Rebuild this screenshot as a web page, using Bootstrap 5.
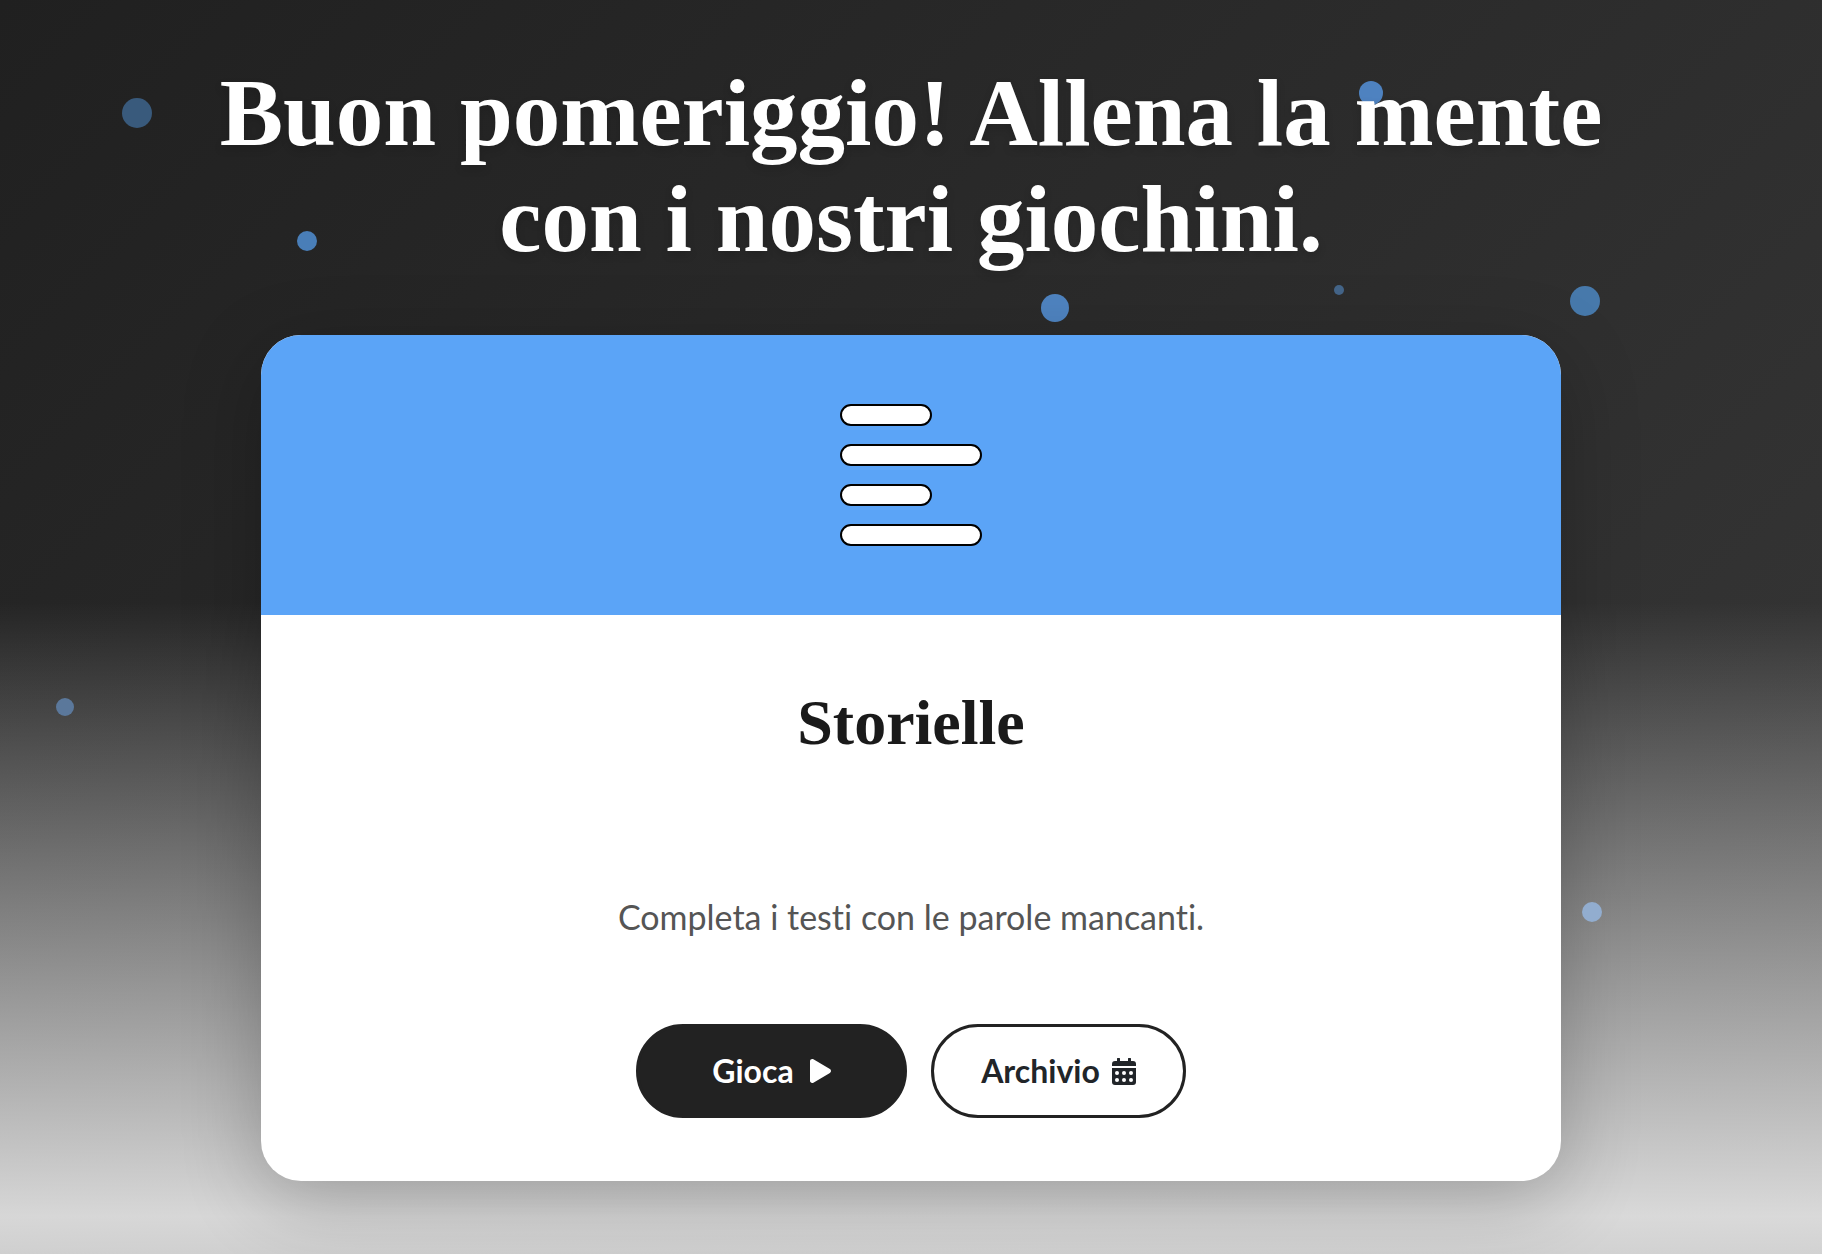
<!DOCTYPE html>
<html lang="it">
<head>
<meta charset="utf-8">
<meta name="viewport" content="width=device-width, initial-scale=1">
<title>Storielle</title>
<link rel="stylesheet" href="https://cdn.jsdelivr.net/npm/bootstrap@5.3.0/dist/css/bootstrap.min.css">
<style>
body { font-family: Lato, "Liberation Sans", sans-serif; font-variant-ligatures: none; color: #222; }
.hero {
  padding: 60px 24px 73px;
  background:
    linear-gradient(to bottom, rgba(250,250,250,0) 48%, rgba(250,250,250,.83) 97%, rgba(244,244,244,.82) 100%),
    linear-gradient(135deg, #202020, #383838);
}
.hero-title {
  max-width: 1420px;
  font: 700 95px/106px "Liberation Serif", serif;
  text-shadow: 0 4px 8px rgba(0,0,0,.15);
  margin-bottom: 63px;
}
.game { max-width: 1300px; border-radius: 40px; box-shadow: 0 20px 80px rgba(0,0,0,.24); }
.game-top { height: 280px; background: #5ba4f7; }
.game-body { padding: 72px 24px 63px; }
.game-name { font: 700 64px/72px "Liberation Serif", serif; color: #1a1a1a; margin-bottom: 136px; }
.game-text { font-size: 34px; line-height: 44px; color: #555; margin-bottom: 85px; }
.pill { height: 94px; border: 3px solid #222; font-size: 32px; font-weight: 700; line-height: 40px; }
.pill-play { width: 271px; --bs-btn-bg: #222; }
.pill-archive { width: 255px; }
.dot { position: absolute; border-radius: 50%; transform: translate(-50%, -50%); }
.dot-a { left: 7.5%; top: 9%; width: 30px; height: 30px; background: #395a7c; }
.dot-b { left: 16.85%; top: 19.2%; width: 20px; height: 20px; background: #497eb8; }
.dot-c { left: 75.25%; top: 7.4%; width: 24px; height: 24px; background: #4e82c0; }
.dot-d { left: 57.9%; top: 24.6%; width: 28px; height: 28px; background: #4f84c1; }
.dot-e { left: 73.5%; top: 23.1%; width: 10px; height: 10px; background: #446589; }
.dot-f { left: 87%; top: 24%; width: 30px; height: 30px; background: #4779ab; }
.dot-g { left: 3.55%; top: 56.35%; width: 18px; height: 18px; background: #5b789b; }
.dot-h { left: 87.4%; top: 72.75%; width: 20px; height: 20px; background: #92adcf; }
</style>
<script src="https://cdn.jsdelivr.net/npm/bootstrap@5.3.0/dist/js/bootstrap.bundle.min.js"></script>
</head>
<body>
<main class="hero position-relative overflow-hidden min-vh-100">
  <span class="dot dot-a"></span><span class="dot dot-b"></span><span class="dot dot-c"></span><span class="dot dot-d"></span>
  <span class="dot dot-e"></span><span class="dot dot-f"></span><span class="dot dot-g"></span>
  <h1 class="hero-title position-relative text-white text-center mx-auto">Buon pomeriggio! Allena la mente con i nostri giochini.</h1>
  <article class="game position-relative bg-white mx-auto overflow-hidden">
    <div class="game-top d-flex align-items-center justify-content-center">
      <svg width="142" height="142" viewBox="0 0 142 142" fill="#fff" stroke="#000" stroke-width="2" aria-hidden="true">
        <rect x="1" y="1" width="90" height="20" rx="10"/><rect x="1" y="41" width="140" height="20" rx="10"/>
        <rect x="1" y="81" width="90" height="20" rx="10"/><rect x="1" y="121" width="140" height="20" rx="10"/>
      </svg>
    </div>
    <div class="game-body text-center">
      <h2 class="game-name">Storielle</h2>
      <p class="game-text">Completa i testi con le parole mancanti.</p>
      <div class="d-flex flex-wrap justify-content-center gap-4">
        <button type="button" class="pill pill-play btn btn-dark rounded-pill d-flex align-items-center justify-content-center gap-3">Gioca
          <svg width="21" height="24" viewBox="0 0 448 512" fill="currentColor" aria-hidden="true"><path d="M424.4 214.7L72.4 6.6C43.8-10.3 0 6.1 0 47.9V464c0 37.5 40.7 60.1 72.4 41.3l352-208c31.4-18.5 31.5-64.1 0-82.6z"/></svg>
        </button>
        <button type="button" class="pill pill-archive btn bg-white rounded-pill d-flex align-items-center justify-content-center gap-2">Archivio
          <svg class="ms-1" width="24" height="27" viewBox="0 0 24 27" fill="currentColor" aria-hidden="true"><path d="M5 3V1a1.500 1.500 0 0 1 3 0v2h8V1a1.500 1.500 0 0 1 3 0v2h2a3 3 0 0 1 3 3v2H0V6a3 3 0 0 1 3-3z"/><path d="M0 10h24v14a3 3 0 0 1-3 3H3a3 3 0 0 1-3-3z"/><g fill="#fff"><circle cx="5" cy="15" r="2"/><circle cx="12" cy="15" r="2"/><circle cx="19" cy="15" r="2"/><circle cx="5" cy="22" r="2"/><circle cx="12" cy="22" r="2"/><circle cx="19" cy="22" r="2"/></g></svg>
        </button>
      </div>
    </div>
  </article>
  <span class="dot dot-h"></span>
</main>
</body>
</html>
